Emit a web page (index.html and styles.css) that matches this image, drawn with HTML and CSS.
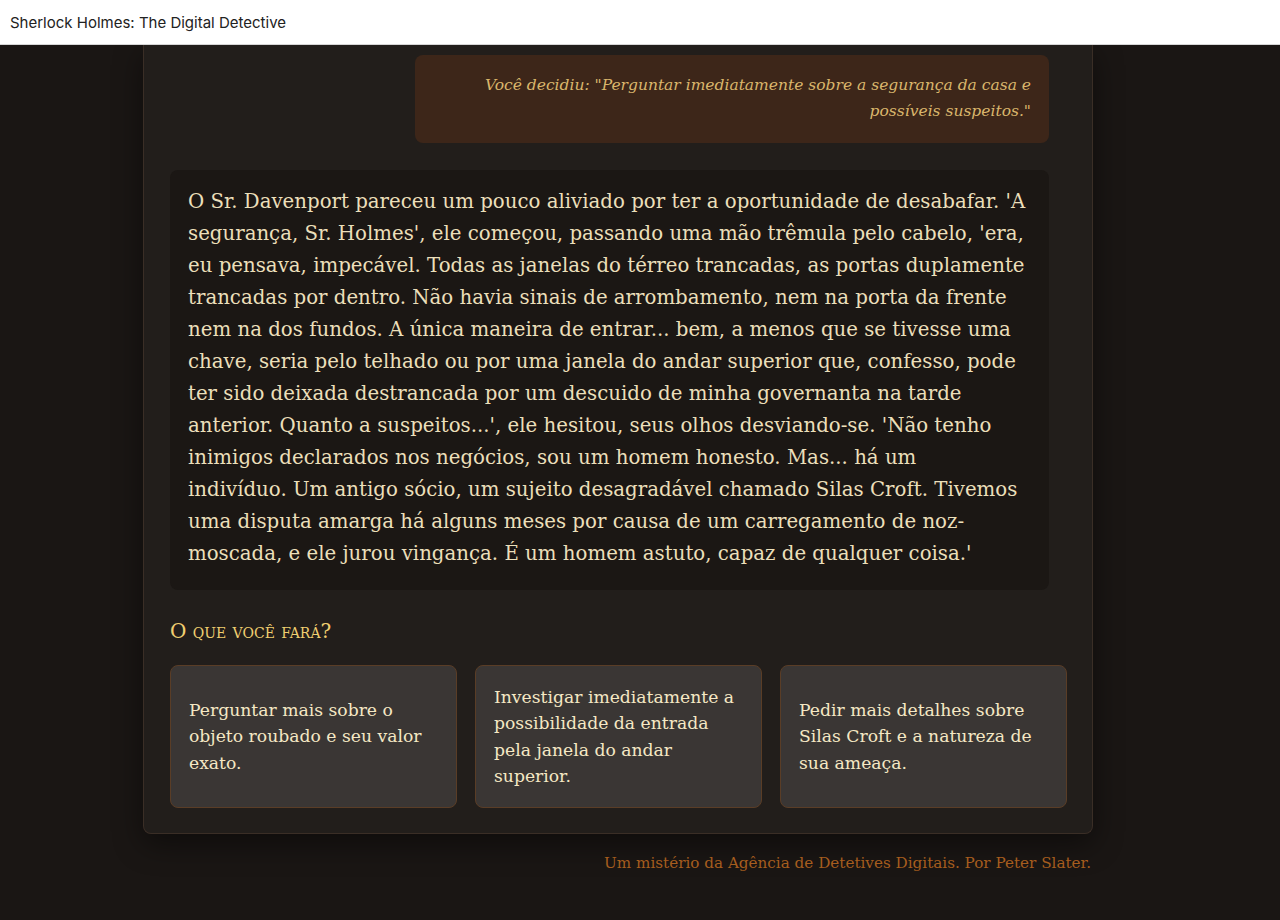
FILE: index.html
```html
<!DOCTYPE html>
<html lang="pt">
<head>
<meta charset="utf-8">
<title>Sherlock Holmes: The Digital Detective</title>
<link rel="stylesheet" href="styles.css">
</head>
<body>
<header class="topbar">Sherlock Holmes: The Digital Detective</header>
<div class="wrap">
  <main class="game">
    <section class="log">
      <div class="decision">Você decidiu: "Perguntar imediatamente sobre a segurança da casa e possíveis suspeitos."</div>
      <div class="story">O Sr. Davenport pareceu um pouco aliviado por ter a oportunidade de desabafar. 'A segurança, Sr. Holmes', ele começou, passando uma mão trêmula pelo cabelo, 'era, eu pensava, impecável. Todas as janelas do térreo trancadas, as portas duplamente trancadas por dentro. Não havia sinais de arrombamento, nem na porta da frente nem na dos fundos. A única maneira de entrar... bem, a menos que se tivesse uma chave, seria pelo telhado ou por uma janela do andar superior que, confesso, pode ter sido deixada destrancada por um descuido de minha governanta na tarde anterior. Quanto a suspeitos...', ele hesitou, seus olhos desviando-se. 'Não tenho inimigos declarados nos negócios, sou um homem honesto. Mas... há um<br>indivíduo. Um antigo sócio, um sujeito desagradável chamado Silas Croft. Tivemos uma disputa amarga há alguns meses por causa de um carregamento de noz-moscada, e ele jurou vingança. É um homem astuto, capaz de qualquer coisa.'</div>
    </section>
    <h2 class="prompt">O que você fará?</h2>
    <div class="choices">
      <button class="choice">Perguntar mais sobre o objeto roubado e seu valor exato.</button>
      <button class="choice">Investigar imediatamente a possibilidade da entrada pela janela do andar superior.</button>
      <button class="choice">Pedir mais detalhes sobre Silas Croft e a natureza de sua ameaça.</button>
    </div>
  </main>
  <footer class="credit">Um mistério da Agência de Detetives Digitais. Por Peter Slater.</footer>
</div>
</body>
</html>
```

FILE: styles.css
```css
html, body {
  margin: 0;
  padding: 0;
}
body {
  background: #1a1614;
  font-family: "DejaVu Serif", "Liberation Serif", serif;
  height: 920px;
  overflow: hidden;
}
.topbar {
  position: relative;
  z-index: 2;
  height: 45px;
  box-sizing: border-box;
  background: #ffffff;
  border-bottom: 1px solid #d6d6d6;
  display: flex;
  align-items: center;
  padding-left: 10px;
  font-family: Inter, "Liberation Sans", sans-serif;
  font-size: 15px;
  color: #222;
}
.wrap {
  width: 950px;
  margin-left: 143px;
}
.game {
  background: #221e1b;
  border: 1px solid #3a2e26;
  border-top: 0;
  border-radius: 0 0 8px 8px;
  padding: 10px 25px 25px 26px;
  box-shadow: 0 10px 30px rgba(0,0,0,0.45);
}
.log {
  padding-right: 18px;
  display: flex;
  flex-direction: column;
  gap: 27px;
}
.decision {
  align-self: flex-end;
  width: 634px;
  box-sizing: border-box;
  background: #3d2619;
  border-radius: 8px;
  padding: 17px 18px 19px;
  text-align: right;
  font-style: italic;
  font-size: 15.5px;
  line-height: 26px;
  color: #dab66c;
}
.story {
  background: #1b1714;
  border-radius: 8px;
  padding: 16px 18px 20px;
  font-size: 19.75px;
  line-height: 32px;
  color: #ebdfba;
}
.prompt {
  margin: 27px 0 20px;
  font-size: 20px;
  line-height: 28px;
  font-weight: normal;
  font-variant: small-caps;
  color: #f0cf70;
}
.choices {
  display: grid;
  grid-template-columns: repeat(3, 1fr);
  gap: 18px;
}
.choice {
  height: 143px;
  box-sizing: border-box;
  background: #3a3634;
  border: 1px solid #5a3d26;
  border-radius: 8px;
  padding: 17px 18px;
  display: flex;
  align-items: center;
  text-align: left;
  font-family: "DejaVu Serif", "Liberation Serif", serif;
  font-size: 17.2px;
  line-height: 26.5px;
  color: #f5e8c4;
}
.credit {
  margin-top: 17px;
  padding-right: 2px;
  text-align: right;
  font-size: 15.2px;
  line-height: 24px;
  color: #a65d1e;
}
```
